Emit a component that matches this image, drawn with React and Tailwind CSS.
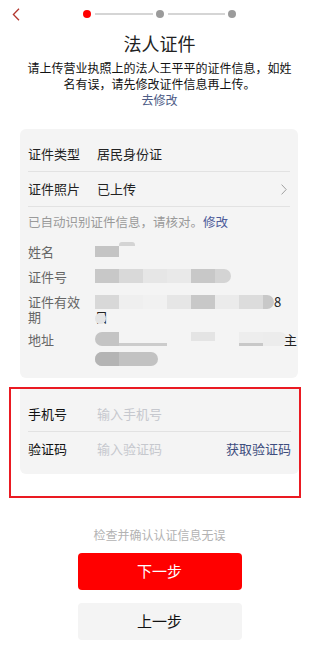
import React from 'react';

const Block = ({ w, c, cls = '' }) => (
  <div className={`h-[14px] shrink-0 ${cls}`} style={{ width: w, background: c }} />
);

function InfoRow({ label, children, className = '' }) {
  return (
    <div className={`flex items-start ${className}`}>
      <div className="w-[56px] shrink-0 text-[13px] leading-[15px] text-[#666]">{label}</div>
      <div className="ml-[11px] flex-1 flex flex-col">{children}</div>
    </div>
  );
}

export default function App() {
  return (
    <div className="w-[319px] h-[668px] bg-white font-['Noto_Sans_CJK_SC','Liberation_Sans',sans-serif] text-[#222] overflow-hidden">
      {/* header with stepper */}
      <div className="relative h-[28px] flex items-center justify-center">
        <svg className="absolute left-[12px] top-[8px]" width="8" height="13" viewBox="0 0 8 13" fill="none">
          <path d="M7 0.8 L1.4 6.5 L7 12.2" stroke="#b3372f" strokeWidth="1.3" />
        </svg>
        <div className="flex items-center">
          <div className="w-2 h-2 rounded-full bg-[#ff0000]" />
          <div className="w-[58px] h-[2px] bg-[#d5d5d5] ml-[4px] mr-[3px]" />
          <div className="w-2 h-2 rounded-full bg-[#9b9b9b]" />
          <div className="w-[57px] h-[2px] bg-[#d5d5d5] ml-[4px] mr-[3px]" />
          <div className="w-2 h-2 rounded-full bg-[#9b9b9b]" />
        </div>
      </div>

      {/* title */}
      <div className="mt-[3px] text-center">
        <h1 className="text-[18px] leading-[24px] font-normal">法人证件</h1>
        <p className="mt-[5px] text-[12px] leading-[16px] text-[#111]">
          请上传营业执照上的法人王平平的证件信息，如姓
          <br />
          名有误，请先修改证件信息再上传。
        </p>
        <div className="text-[12px] leading-[16px] text-[#4d5b86]">去修改</div>
      </div>

      {/* id info card */}
      <div className="mt-[21px] mx-[20px] w-[278px] rounded-[6px] bg-[#f4f4f4] px-[8px] pt-[8px] pb-[11px]">
        <div className="h-[34px] flex items-center text-[13px]">
          <span className="w-[69px]">证件类型</span>
          <span>居民身份证</span>
        </div>
        <div className="h-px bg-[#e2e2e2]" />
        <div className="h-[34px] flex items-center text-[13px]">
          <span className="w-[69px]">证件照片</span>
          <span className="flex-1">已上传</span>
          <svg className="mr-[3px]" width="6" height="11" viewBox="0 0 6 11" fill="none">
            <path d="M0.6 0.6 L5.2 5.5 L0.6 10.4" stroke="#a0a0a0" strokeWidth="1" />
          </svg>
        </div>
        <div className="h-px bg-[#e2e2e2]" />
        <div className="h-[30px] flex items-center text-[12.5px] text-[#9a9a9a]">
          已自动识别证件信息，请核对。<span className="text-[#4d5b9a]">修改</span>
        </div>

        <InfoRow label="姓名" className="mt-[7px]">
          <div className="relative h-[15px]">
            <div className="absolute left-[24px] -top-[2px] w-[16px] h-[4px] rounded-t-[3px] bg-[#d4d4d4]" />
            <div className="absolute left-0 top-[2px] w-[24px] h-[11px] bg-[#c4c4c4]" />
          </div>
        </InfoRow>

        <InfoRow label="证件号" className="mt-[10px]">
          <div className="flex">
            <Block w={24} c="#c8c8c8" />
            <Block w={24} c="#d9d9d9" />
            <Block w={24} c="#e6e6e6" />
            <Block w={24} c="#e9e9e9" />
            <Block w={24} c="#c8c8c8" />
            <Block w={16} c="#d4d4d4" cls="rounded-r-[7px]" />
          </div>
        </InfoRow>

        <InfoRow label="证件有效期" className="mt-[10px]">
          <div className="flex items-center h-[15px]">
            <Block w={24} c="#d8d8d8" />
            <Block w={24} c="#efefef" />
            <Block w={24} c="#f1f1f1" />
            <Block w={24} c="#e6e6e6" />
            <Block w={24} c="#c8c8c8" />
            <Block w={24} c="#ebebeb" />
            <Block w={24} c="#dcdcdc" />
            <Block w={11} c="#c8c8c8" cls="rounded-r-[7px]" />
            <span className="text-[13px] leading-[15px] text-[#222]">8</span>
          </div>
          <div className="relative h-[15px] text-[13px] leading-[15px] text-[#222]">
            日
            <div className="absolute left-0 top-[4px] w-[11px] h-[11px] rounded-full bg-[#e4e4e4]" />
          </div>
        </InfoRow>

        <InfoRow label="地址" className="mt-[8px]">
          <div className="flex items-start h-[15px]">
            <div className="w-[24px] h-[14px] bg-[#c4c4c4] rounded-l-[7px]" />
            <div className="w-[48px] h-[14px] flex flex-col justify-end">
              <div className="h-[3px] bg-[#cccccc]" />
            </div>
            <div className="w-[24px]" />
            <div className="w-[24px] h-[9px] bg-[#e4e4e4]" />
            <div className="w-[24px]" />
            <div className="w-[24px] h-[14px] flex flex-col justify-end bg-[#ededed]">
              <div className="h-[3px] bg-[#c8c8c8]" />
            </div>
            <div className="w-[24px] h-[14px] bg-[#ececec] rounded-r-[7px]" />
            <span className="-ml-[3px] text-[13px] leading-[15px] text-[#222]">主</span>
          </div>
          <div className="relative mt-[5px] h-[15px]">
            <div className="absolute left-0 top-0 w-[63px] h-[14px] rounded-full bg-[#c2c2c2]" />
            <div className="absolute left-0 top-0 w-[24px] h-[14px] rounded-l-full bg-[#b4b4b4]" />
          </div>
        </InfoRow>
      </div>

      {/* highlighted phone card */}
      <div className="mt-[9px] ml-[9px] w-[292px] border-2 border-[#ea1a22] pl-[9px] pb-[22px]">
        <div className="w-[279px] rounded-b-[6px] bg-[#f4f4f4] px-[8px] py-[8px]">
          <div className="h-[34px] flex items-center text-[13px]">
            <span className="w-[69px] text-[#111]">手机号</span>
            <span className="text-[#c6c8ce]">输入手机号</span>
          </div>
          <div className="h-px bg-[#e2e2e2]" />
          <div className="h-[34px] flex items-center text-[13px]">
            <span className="w-[69px] text-[#111]">验证码</span>
            <span className="flex-1 text-[#c6c8ce]">输入验证码</span>
            <span className="text-[#3e4d7e]">获取验证码</span>
          </div>
        </div>
      </div>

      {/* actions */}
      <div className="mt-[29px] text-center text-[12px] leading-[15px] text-[#b3b3b3]">检查并确认认证信息无误</div>
      <div className="mt-[11px] flex flex-col items-center gap-[13px]">
        <button className="w-[164px] h-[37px] rounded-[4px] bg-[#ff0000] text-white text-[15px]">下一步</button>
        <button className="w-[164px] h-[37px] rounded-[4px] bg-[#f4f4f4] text-[#111] text-[15px]">上一步</button>
      </div>
    </div>
  );
}
